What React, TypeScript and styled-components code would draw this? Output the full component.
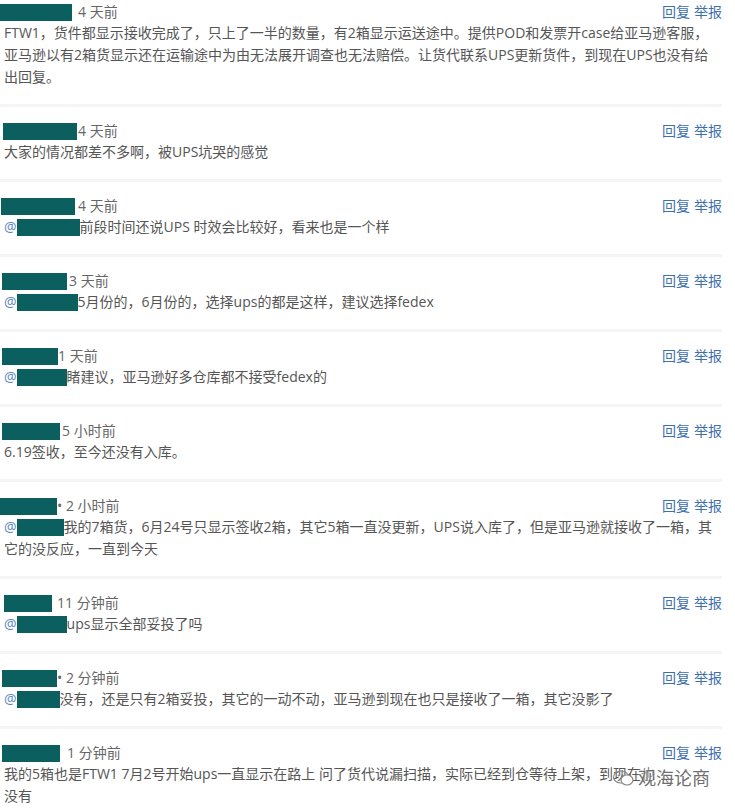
import styled, { createGlobalStyle } from "styled-components";

const GlobalStyle = createGlobalStyle`
  body {
    margin: 0;
    background: #ffffff;
    font-family: "Open Sans", "Noto Sans CJK SC", sans-serif;
    color: #555;
  }
`;

const Page = styled.div`
  width: 735px;
  height: 811px;
  overflow: hidden;
`;
const CommentList = styled.ul`
  list-style: none;
  margin: 0;
  padding: 0;
  width: 722px;
`;
const Comment = styled.li<{ $first?: boolean }>`
  position: relative;
  border-top: ${(p) => (p.$first ? "none" : "3px solid #f5f5f5")};
  padding: ${(p) => (p.$first ? "2px" : "14px")} 0 16px 0;
`;
const Header = styled.div`
  display: flex;
  align-items: center;
  height: 20px;
  line-height: 20px;
  font-size: 14px;
`;
const NameMask = styled.span<{ $left: number; $width: number }>`
  display: inline-block;
  margin-left: ${(p) => p.$left}px;
  width: ${(p) => p.$width}px;
  height: 17px;
  background: #0b605f;
`;
const Time = styled.span<{ $gap: number }>`
  margin-left: ${(p) => p.$gap}px;
  color: #666;
  white-space: pre;
`;
const Actions = styled.div`
  margin-left: auto;
  display: flex;
  gap: 4px;
  a {
    color: #3e6fae;
    text-decoration: none;
  }
`;
const Body = styled.div`
  padding-left: 4px;
  font-size: 14px;
  line-height: 22px;
  color: #555;
  white-space: nowrap;
`;
const Line = styled.div``;
const At = styled.span`
  color: #5b85bd;
`;
const MentionMask = styled.span<{ $width: number }>`
  display: inline-block;
  width: ${(p) => p.$width}px;
  height: 17px;
  vertical-align: -4px;
  background: #0b605f;
`;
const Watermark = styled.div`
  position: absolute;
  right: 12px;
  top: 38px;
  display: flex;
  align-items: center;
  gap: 4px;
  font-size: 18px;
  line-height: 22px;
  color: rgba(70, 70, 70, 0.8);
  text-shadow: 0 0 2px #fff, 0 0 2px #fff;
  svg {
    display: block;
  }
`;

interface IComment {
  nameLeft: number;
  nameWidth: number;
  timeX: number;
  time: string;
  mention?: number;
  lines: string[];
  mark?: boolean;
}

const comments: IComment[] = [
  {
    nameLeft: 0, nameWidth: 72, timeX: 78, time: "4 天前",
    lines: [
      "FTW1，货件都显示接收完成了，只上了一半的数量，有2箱显示运送途中。提供POD和发票开case给亚马逊客服，",
      "亚马逊以有2箱货显示还在运输途中为由无法展开调查也无法赔偿。让货代联系UPS更新货件，到现在UPS也没有给",
      "出回复。",
    ],
  },
  { nameLeft: 3, nameWidth: 74, timeX: 78, time: "4 天前", lines: ["大家的情况都差不多啊，被UPS坑哭的感觉"] },
  { nameLeft: 1, nameWidth: 74, timeX: 78, time: "4 天前", mention: 63, lines: ["前段时间还说UPS 时效会比较好，看来也是一个样"] },
  { nameLeft: 2, nameWidth: 65, timeX: 69, time: "3 天前", mention: 61, lines: ["5月份的，6月份的，选择ups的都是这样，建议选择fedex"] },
  { nameLeft: 2, nameWidth: 56, timeX: 58, time: "1 天前", mention: 50, lines: ["睹建议，亚马逊好多仓库都不接受fedex的"] },
  { nameLeft: 2, nameWidth: 58, timeX: 62, time: "5 小时前", lines: ["6.19签收，至今还没有入库。"] },
  {
    nameLeft: 0, nameWidth: 57, timeX: 57, time: "• 2 小时前", mention: 47,
    lines: [
      "我的7箱货，6月24号只显示签收2箱，其它5箱一直没更新，UPS说入库了，但是亚马逊就接收了一箱，其",
      "它的没反应，一直到今天",
    ],
  },
  { nameLeft: 4, nameWidth: 48, timeX: 57, time: "11 分钟前", mention: 50, lines: ["ups显示全部妥投了吗"] },
  { nameLeft: 2, nameWidth: 55, timeX: 57, time: "• 2 分钟前", mention: 43, lines: ["没有，还是只有2箱妥投，其它的一动不动，亚马逊到现在也只是接收了一箱，其它没影了"] },
  {
    nameLeft: 2, nameWidth: 58, timeX: 67, time: "1 分钟前", mark: true,
    lines: [
      "我的5箱也是FTW1 7月2号开始ups一直显示在路上 问了货代说漏扫描，实际已经到仓等待上架，到现在也",
      "没有",
    ],
  },
];

function App() {
  return (
    <Page>
      <GlobalStyle />
      <CommentList>
        {comments.map((c, i) => (
          <Comment key={i} $first={i === 0}>
            <Header>
              <NameMask $left={c.nameLeft} $width={c.nameWidth} />
              <Time $gap={c.timeX - c.nameLeft - c.nameWidth}>{c.time}</Time>
              <Actions>
                <a href="#">回复</a>
                <a href="#">举报</a>
              </Actions>
            </Header>
            <Body>
              {c.lines.map((line, j) => (
                <Line key={j}>
                  {j === 0 && c.mention ? (
                    <>
                      <At>@</At>
                      <MentionMask $width={c.mention} />
                    </>
                  ) : null}
                  {line}
                </Line>
              ))}
            </Body>
            {c.mark && (
              <Watermark>
                <svg width="22" height="18" viewBox="0 0 22 18">
                  <ellipse cx="9" cy="8" rx="7.5" ry="6" fill="none" stroke="#888" strokeWidth="1.2" />
                  <ellipse cx="15" cy="11" rx="6" ry="5" fill="#fff" stroke="#888" strokeWidth="1.2" />
                  <circle cx="6.5" cy="6.5" r="0.9" fill="#888" />
                  <circle cx="11" cy="6.5" r="0.9" fill="#888" />
                </svg>
                <span>观海论商</span>
              </Watermark>
            )}
          </Comment>
        ))}
      </CommentList>
    </Page>
  );
}

export default App;
